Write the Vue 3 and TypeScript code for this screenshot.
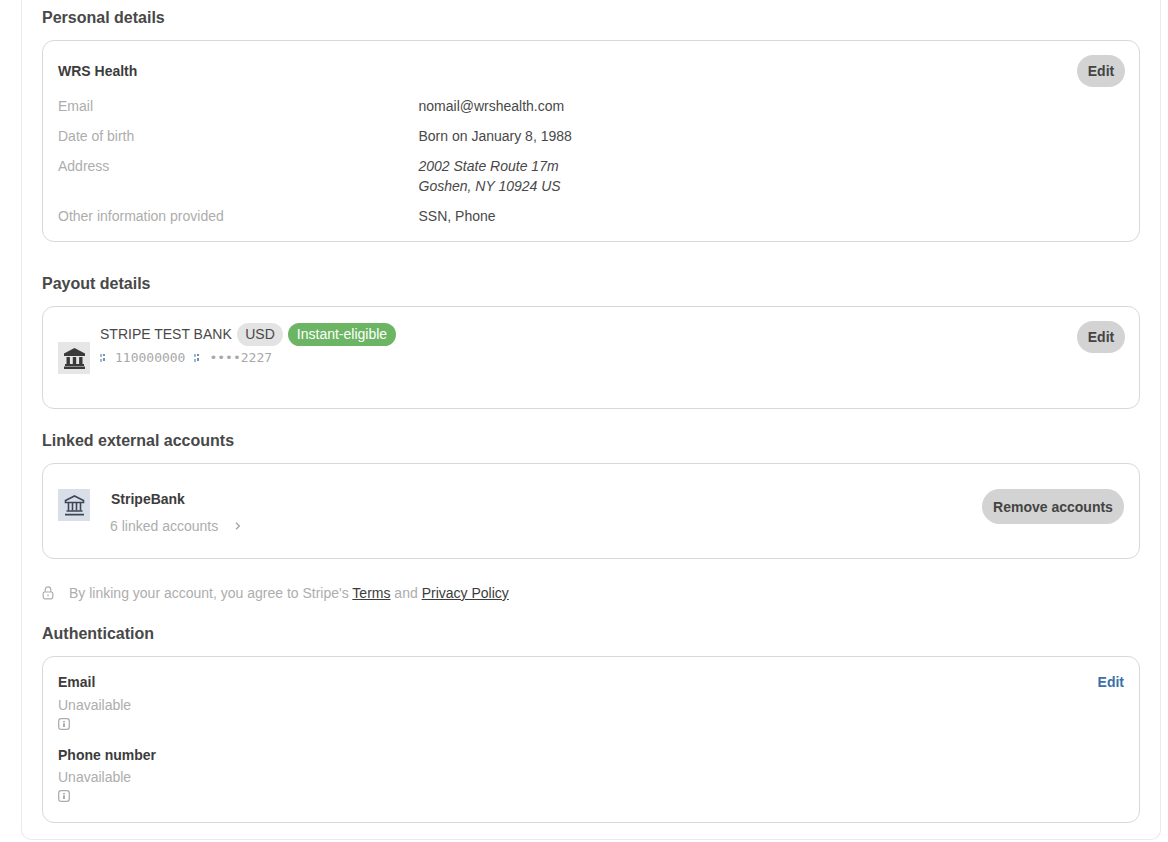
<template>
  <div class="panel">
    <h2 class="heading">Personal details</h2>
    <section class="card personal">
      <div class="card-top">
        <span class="strong">WRS Health</span>
        <button class="pill edit">Edit</button>
      </div>
      <dl class="details">
        <template v-for="row in personalRows" :key="row.label">
          <dt>{{ row.label }}</dt>
          <dd :class="{ address: row.lines.length > 1 }">
            <div v-for="line in row.lines" :key="line">{{ line }}</div>
          </dd>
        </template>
      </dl>
    </section>

    <h2 class="heading payout-heading">Payout details</h2>
    <section class="card payout">
      <div class="icon-box grey">
        <svg width="21" height="21" viewBox="0 0 21 21" fill="#3a3a3a">
          <path d="M10.5 0 L21 5.5 V8 H0 V5.5 Z" />
          <rect x="2.5" y="9" width="3.4" height="7" />
          <rect x="8.8" y="9" width="3.4" height="7" />
          <rect x="15.1" y="9" width="3.4" height="7" />
          <rect x="1" y="16" width="19" height="2" />
          <rect x="0" y="18.5" width="21" height="2.5" />
        </svg>
      </div>
      <div class="bank">
        <div class="bank-name">
          <span>STRIPE TEST BANK</span>
          <span class="chip">USD</span>
          <span class="chip green">Instant-eligible</span>
        </div>
        <div class="routing">
          <svg class="sep" width="6" height="10" viewBox="0 0 6 10"><rect x="0" y="1" width="2" height="3" fill="#9fb6d2" /><rect x="0" y="6" width="2" height="3" fill="#9fb6d2" /><rect x="3" y="1" width="2" height="2" fill="#6f90b8" /><rect x="3" y="5" width="2" height="3" fill="#6f90b8" /></svg>
          <span>110000000</span>
          <svg class="sep" width="6" height="10" viewBox="0 0 6 10"><rect x="0" y="1" width="2" height="3" fill="#9fb6d2" /><rect x="0" y="6" width="2" height="3" fill="#9fb6d2" /><rect x="3" y="1" width="2" height="2" fill="#6f90b8" /><rect x="3" y="5" width="2" height="3" fill="#6f90b8" /></svg>
          <span>••••2227</span>
        </div>
      </div>
      <button class="pill edit">Edit</button>
    </section>

    <h2 class="heading linked-heading">Linked external accounts</h2>
    <section class="card linked">
      <div class="icon-box blue">
        <svg width="21" height="21" viewBox="0 0 21 21" fill="none" stroke="#3d4656" stroke-width="1.6">
          <path d="M10.5 1 L19.5 5.5 V7.5 H1.5 V5.5 Z" />
          <path d="M4.5 8 V15.5 M8.5 8 V15.5 M12.5 8 V15.5 M16.5 8 V15.5" />
          <path d="M2.5 16 H18.5 M1 19.6 H20" />
        </svg>
      </div>
      <div class="linked-text">
        <div class="strong stripe-bank">StripeBank</div>
        <div class="linked-count">
          <span>6 linked accounts</span>
          <svg width="6" height="8" viewBox="0 0 6 8" fill="none" stroke="#a3a3a3" stroke-width="1.3"><path d="M1 0.8 L4.4 4 L1 7.2" /></svg>
        </div>
      </div>
      <button class="pill remove">Remove accounts</button>
    </section>

    <p class="agree">
      <svg width="12" height="14" viewBox="0 0 12 14" fill="none" stroke="#adadad" stroke-width="1.2">
        <path d="M3.2 6 V3.6 a2.8 2.8 0 0 1 5.6 0 V6" />
        <rect x="1.2" y="6" width="9.6" height="6.8" rx="1.5" />
        <path d="M6 8.6 V10.2" />
      </svg>
      <span>By linking your account, you agree to Stripe's <a>Terms</a> and <a>Privacy Policy</a></span>
    </p>

    <h2 class="heading auth-heading">Authentication</h2>
    <section class="card auth">
      <a class="auth-edit">Edit</a>
      <div v-for="item in authItems" :key="item" class="auth-item">
        <div class="strong">{{ item }}</div>
        <div class="muted">Unavailable</div>
        <svg class="info" width="12" height="12" viewBox="0 0 12 12" fill="none" stroke="#adadad" stroke-width="1.3">
          <rect x="0.7" y="0.7" width="10.6" height="10.6" rx="2.4" />
          <path d="M6 5.2 V9 M6 3 V4.2" stroke="#8a8a8a" stroke-width="1.4" />
        </svg>
      </div>
    </section>
  </div>
</template>

<script setup lang="ts">
interface PersonalRow {
  label: string
  lines: string[]
}

const personalRows: PersonalRow[] = [
  { label: 'Email', lines: ['nomail@wrshealth.com'] },
  { label: 'Date of birth', lines: ['Born on January 8, 1988'] },
  { label: 'Address', lines: ['2002 State Route 17m', 'Goshen, NY 10924 US'] },
  { label: 'Other information provided', lines: ['SSN, Phone'] },
]

const authItems = ['Email', 'Phone number']
</script>

<style>
html,
body {
  background: #fff;
}
</style>

<style scoped>
.panel {
  box-sizing: border-box;
  width: 1140px;
  height: 840px;
  margin-left: 21px;
  padding: 8px 20px 0;
  border: 1px solid #e9e9ee;
  border-top: none;
  border-radius: 0 0 10px 10px;
  background: #fff;
  color: #484848;
  font-family: "Liberation Sans", Arial, sans-serif;
  font-size: 14px;
  line-height: 20px;
}

.heading {
  margin: 0 0 12px;
  font-size: 16px;
  font-weight: 700;
  line-height: 20px;
}

.payout-heading {
  margin-top: 32px;
}

.linked-heading {
  margin-top: 22px;
}

.auth-heading {
  margin-top: 21px;
}

.card {
  box-sizing: border-box;
  width: 1098px;
  border: 1px solid #d8d8d8;
  border-radius: 12px;
  background: #fff;
}

.personal {
  height: 202px;
  padding: 14px 14px 0 15px;
}

.card-top {
  display: flex;
  align-items: center;
  justify-content: space-between;
  height: 32px;
}

.strong {
  color: #3c3c3c;
  font-weight: 700;
}

.pill {
  border: none;
  border-radius: 18px;
  background: #d3d3d3;
  color: #444;
  font-family: inherit;
  font-size: 14px;
  font-weight: 700;
  padding: 0;
}

.edit {
  flex: none;
  width: 48px;
  height: 32px;
}

.details {
  display: grid;
  grid-template-columns: 360.5px 1fr;
  row-gap: 10px;
  margin: 9px 0 0;
}

.details dt {
  color: #adadad;
}

.details dd {
  margin: 0;
}

.address {
  font-style: italic;
}

.payout {
  display: flex;
  align-items: flex-start;
  height: 103px;
  padding: 14px 14px 0 15px;
}

.icon-box {
  flex: none;
  display: flex;
  align-items: center;
  justify-content: center;
  width: 32px;
  height: 32px;
}

.grey {
  margin-top: 21px;
  background: #e6e6e6;
}

.blue {
  background: #d8dfe8;
}

.bank {
  flex: 1;
  margin-left: 10px;
}

.bank-name {
  display: flex;
  align-items: center;
  gap: 5px;
  height: 24px;
  margin-top: 1px;
}

.chip {
  display: flex;
  align-items: center;
  height: 23px;
  padding: 0 8.5px;
  border-radius: 12px;
  background: #e3e3e3;
}

.green {
  background: #6cb564;
  color: #fff;
}

.routing {
  display: flex;
  align-items: center;
  gap: 9px;
  height: 18px;
  margin-top: 3px;
  color: #a8a8a8;
  font-family: "DejaVu Sans Mono", monospace;
  font-size: 13px;
}

.sep {
  flex: none;
}

.linked {
  display: flex;
  align-items: flex-start;
  height: 96px;
  padding: 25px 15px 0 15px;
}

.linked-text {
  flex: 1;
  margin-left: 20px;
}

.stripe-bank {
  margin-left: 1px;
}

.linked-count {
  display: flex;
  align-items: center;
  gap: 17px;
  margin-top: 7px;
  color: #adadad;
}

.remove {
  width: 142px;
  height: 35px;
}

.agree {
  display: flex;
  align-items: center;
  gap: 15px;
  height: 20px;
  margin: 24px 0 0;
  color: #adadad;
}

.agree a {
  color: #3c3c3c;
  text-decoration: underline;
}

.auth {
  position: relative;
  height: 167px;
  padding: 15px 15px 0;
}

.auth-edit {
  position: absolute;
  top: 15px;
  right: 15px;
  color: #3d6fa8;
  font-weight: 700;
}

.auth-item {
  height: 73px;
}

.muted {
  margin-top: 3px;
  color: #adadad;
}

.auth-item + .auth-item .muted {
  margin-top: 2px;
}

.info {
  display: block;
  margin-top: 3px;
}
</style>
